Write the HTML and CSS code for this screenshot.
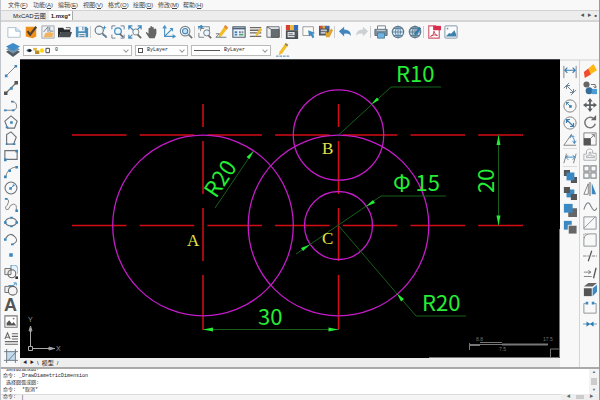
FILE: index.html
```html
<!DOCTYPE html>
<html lang="zh-CN">
<head>
<meta charset="utf-8">
<title>MxCAD云图</title>
<link rel="stylesheet" href="styles.css">
</head>
<body>
<div class="app">
<nav class="menu">
<button>文件(<u>F</u>)</button><button>功能(<u>A</u>)</button><button>编辑(<u>E</u>)</button><button>视图(<u>V</u>)</button><button>格式(<u>O</u>)</button><button>绘图(<u>D</u>)</button><button>修改(<u>M</u>)</button><button>帮助(<u>H</u>)</button>
</nav>
<div class="tabs">
<button class="tab">MxCAD云图</button><button class="tab active">1.mxg*</button>
<span class="tab-nav"><button aria-label="上一个">◀</button><button aria-label="下一个">▶</button><button aria-label="关闭">■</button></span>
</div>
<div class="toolbar">
<button aria-label="新建"><svg viewBox="0 0 16 16"><path d="M1 3h9l5 4v7H1z" fill="#fff" stroke="#a5bccb"/><path d="M10 3v4h5" fill="#dcebf5" stroke="#8fb4cf"/></svg></button>
<button aria-label="打开"><svg viewBox="0 0 16 16"><path d="M2 2h10l2 2v9l-4 2-8-2z" fill="#f09018"/><path d="M4 7l3 4 7-9" fill="none" stroke="#504238" stroke-width="2.5"/></svg></button>
<button aria-label="图纸"><svg viewBox="0 0 16 16"><path d="M1 1h14v14H1z" fill="#eef1f4" stroke="#9aa0a8"/><path d="M3 8l5-6v6M10 2v5h4" fill="none" stroke="#6d7a88"/><path d="M3 14l2-5 5-1 4 1-1 5z" fill="#efb45d"/></svg></button>
<button aria-label="打开文件"><svg viewBox="0 0 16 16"><path d="M0 3h6l1 2h7v3H3l-2 6H0z" fill="#292c2e"/><path d="M3 8h13l-2 6H1z" fill="#484e50"/><path d="M9 3h5v2" fill="none" stroke="#555"/></svg></button>
<button aria-label="保存"><svg viewBox="0 0 16 16"><path d="M1 2h12l2 2v10H1z" fill="#4b8dba"/><path d="M4 2h7v5H4zM4 9h8v5H4z" fill="#f5f8fa"/><path d="M9 2v4M5 11h6M5 13h6" stroke="#416d90"/></svg></button>
<i class="sep"></i>
<button aria-label="实时缩放"><svg viewBox="0 0 16 16"><circle cx="6" cy="6" r="4.7" fill="#eef8fd" stroke="#707980" stroke-width="1.3"/><path d="M9.500 9.500l5 5" stroke="#707980" stroke-width="2"/><path d="M12 1v4M10 3h4M10 12h4" stroke="#3d8bc6"/></svg></button>
<button aria-label="窗口缩放"><svg viewBox="0 0 16 16"><path d="M1 5V1h4M11 1h4v4M1 11v4h4M15 11v4h-4" fill="none" stroke="#627582"/><circle cx="8" cy="7" r="3.800" fill="#edf8fc" stroke="#468fc0" stroke-width="1.400"/><path d="M10 10l4 4" stroke="#626970" stroke-width="2"/></svg></button>
<button aria-label="范围缩放"><svg viewBox="0 0 16 16"><path d="M1 5V1h4M1 1l5 5M11 1h4v4M15 1l-5 5M1 11v4h4M1 15l4-4" fill="none" stroke="#3d88bf" stroke-width="1.400"/><circle cx="9" cy="8" r="3.500" fill="#eef7fb" stroke="#777"/><path d="M11 11l4 4" stroke="#666" stroke-width="2"/></svg></button>
<button aria-label="平移"><svg viewBox="0 0 16 16"><path d="M5 15l-4-6q0-2 2 0l1 1V4q1-2 2 0V2q1-2 2 0v1q1-2 2 0v2q2-2 3 0v5l-2 5z" fill="#656565"/></svg></button>
<button aria-label="坐标系"><svg viewBox="0 0 16 16"><path d="M3 1v12h12M3 13l9-9M1 4l2-3 2 3M12 11l3 2-3 2M9 4h3v3" fill="none" stroke="#4a91c5" stroke-width="1.300"/></svg></button>
<button aria-label="全部缩放"><svg viewBox="0 0 16 16"><circle cx="7" cy="7" r="5.500" fill="#f5fafc" stroke="#7b858d" stroke-width="1.300"/><circle cx="7" cy="7" r="3" fill="#c7e1f1" stroke="#4288b9" stroke-width="1.300"/><path d="M11 11l4 4" stroke="#777" stroke-width="2"/></svg></button>
<i class="sep"></i>
<button aria-label="查找"><svg viewBox="0 0 16 16"><path d="M1 5V2h12v5M1 9v5h6M3 7V4h4" fill="none" stroke="#6b7985"/><path d="M0 2h5M3 0l2 2-2 2" fill="none" stroke="#3a89bf" stroke-width="1.500"/><circle cx="10" cy="9" r="3.500" fill="#e9f5fc" stroke="#61717d"/><path d="M12 12l3 3" stroke="#666" stroke-width="2"/></svg></button>
<button aria-label="画笔"><svg viewBox="0 0 16 16"><path d="M5 10l7-10 3 3-8 10-3 1z" fill="#f5bd25"/><path d="M12 0l3 3-2 2-3-3z" fill="#e68a40"/><path d="M1 10h4l-4 4h12" fill="none" stroke="#606a72"/></svg></button>
<button aria-label="特性"><svg viewBox="0 0 16 16"><path d="M1 2h14v12H1z" fill="#edf3f8" stroke="#52606c" stroke-width="1.300"/><path d="M1 4h14" stroke="#4a6179" stroke-width="2"/><path d="M3 7h3v2H3zM3 10h3v2H3z" fill="#4380bd"/><path d="M8 7h2v2H8z" fill="#b24ec4"/><path d="M11 7h2v2h-2zM8 10h5v2H8z" fill="#54a870"/></svg></button>
<button aria-label="图层列表"><svg viewBox="0 0 16 16"><path d="M1 3h13M1 6h13M1 9h13M1 13h13" stroke="#6b6b64" stroke-width="1.500"/><path d="M8 10l5-7 2 2-5 7-3 1z" fill="#edbd3d"/></svg></button>
<button aria-label="块"><svg viewBox="0 0 16 16"><path d="M1 2h14v12H1z" fill="#edf0f3" stroke="#59636b"/><path d="M6 5h9v9H6zM1 2l5 3" fill="#666d71" stroke="#555"/></svg></button>
<i class="sep"></i>
<button aria-label="颜色"><svg viewBox="0 0 16 16"><path d="M1 0h5v6H1z" fill="#d73e33"/><path d="M6 0h4v6H6z" fill="#ebbc30"/><path d="M10 0h5v6h-5z" fill="#3469bb"/><path d="M1 6h14v10H1z" fill="#4b5257"/><path d="M3 8h8v6H3z" fill="#e3e6e8"/><path d="M4 10h5M4 12h8l2-5" fill="none" stroke="#59616a"/></svg></button>
<button aria-label="选择"><svg viewBox="0 0 16 16"><path d="M1 2h12v10H1z" fill="#fcfcf5" stroke="#91929a"/><path d="M7 6l8 3-3 1 2 4-2 1-2-4-2 2z" fill="#3c8cc5"/></svg></button>
<button aria-label="匹配"><svg viewBox="0 0 16 16"><path d="M0 1h12v11H0z" fill="#4f5762"/><path d="M1 1h3v3H1z" fill="#d84c3e"/><path d="M4 1h3v3H4z" fill="#d8a838"/><path d="M7 1h4v3H7z" fill="#3d70ba"/><path d="M2 6h7M2 9h5" stroke="#c3c6cc" stroke-width="2"/><path d="M7 7l3 2 4-5 2 2-4 8H8z" fill="#dfa52e"/></svg></button>
<i class="sep"></i>
<button aria-label="撤销"><svg viewBox="0 0 16 16"><path d="M1 7l6-5v3q8 0 8 8-2-4-8-3v3z" fill="#4286bd"/></svg></button>
<button aria-label="重做"><svg viewBox="0 0 16 16"><path d="M15 7L9 2v3q-8 0-8 8 2-4 8-3v3z" fill="#cdd0d2"/></svg></button>
<i class="sep"></i>
<button aria-label="打印"><svg viewBox="0 0 16 16"><path d="M4 1h9v4H4z" fill="#fff" stroke="#657480"/><path d="M1 5h14v7H1z" fill="#7e8d98" stroke="#596b77"/><path d="M3 6h10" stroke="#d0e5f2"/><path d="M4 9h8v6H4z" fill="#73b5e0" stroke="#497a9b"/></svg></button>
<button aria-label="网页"><svg viewBox="0 0 16 16"><circle cx="8" cy="8" r="6.500" fill="#dceaf3" stroke="#637b8c" stroke-width="1.300"/><path d="M1 8h14M8 1v14M3 4h10M3 12h10M8 1q-6 7 0 14M8 1q6 7 0 14" fill="none" stroke="#557f9e"/></svg></button>
<button aria-label="上传"><svg viewBox="0 0 16 16"><circle cx="8" cy="8" r="6.500" fill="#bfd0da" stroke="#637b8c" stroke-width="1.300"/><path d="M1 8h14M8 1v14M3 4h10M3 12h10M8 1q-6 7 0 14M8 1q6 7 0 14" fill="none" stroke="#58798f"/><path d="M7 10l6-8 2 2-6 8" fill="#3479ab"/></svg></button>
<i class="sep"></i>
<button aria-label="导出PDF"><svg viewBox="0 0 16 16"><path d="M2 1h8l4 4v10H2z" fill="#fff" stroke="#d25a70" stroke-width="1.300"/><path d="M7 1h9v5H7z" fill="#d92d4d"/><path d="M4 13q4-1 4-6 1 5 4 5-4-2-8 1" fill="none" stroke="#cc3954"/></svg></button>
<button aria-label="导出图片"><svg viewBox="0 0 16 16"><rect x="1" y="1" width="14" height="14" rx="1" fill="#f9fbfc" stroke="#758c9b"/><path d="M2 13l4-4 2 1 4-4 2 5v2z" fill="#3d82af"/><circle cx="4" cy="4" r="1" fill="#7292a5"/></svg></button>
</div>
<div class="toolbar props">
<button class="layers" aria-label="图层"><svg viewBox="0 0 16 16"><path d="M0 10l8-4 8 4-8 6z" fill="#505b66"/><path d="M0 7l8-4 8 4-8 5z" fill="#7796ac"/><path d="M0 4l8-4 8 4-8 5z" fill="#3e8cc9"/></svg></button>
<label class="combo layer"><svg class="states" viewBox="0 0 28 8"><path d="M0 4q3-4 7 0-4 4-7 0" fill="#50677a"/><circle cx="4" cy="4" r="1.500" fill="#111"/><path d="M8 1h4v3H8z" fill="#dfb13b"/><path d="M10 4h5v4h-5z" fill="#b98d24"/><circle cx="18" cy="4" r="2.500" fill="#ffd61e"/><path d="M22.500 1.500h4v5h-4z" fill="#fff" stroke="#333"/></svg><select aria-label="图层"><option>0</option></select></label>
<label class="combo color"><i class="swatch"></i><select aria-label="颜色"><option>ByLayer</option></select></label>
<label class="combo line"><i class="stroke"></i><select aria-label="线型"><option>ByLayer</option></select></label>
<button aria-label="线型编辑"><svg viewBox="0 0 16 16"><path d="M4 10l7-10 3 2-7 10-4 2z" fill="#f5bd25"/><path d="M11 0l3 2-1 2-3-2z" fill="#9b8368"/><path d="M0 15h16" stroke="#3e73a8" stroke-dasharray="3 1"/></svg></button>
</div>
<main class="work">
<div class="tools left">
<button aria-label="直线"><svg viewBox="0 0 16 16"><path d="M2 14L14 2" stroke="#777"/><path d="M1 12h3v3H1zM12 1h3v3h-3z" fill="#4186b9"/></svg></button>
<button aria-label="构造线"><svg viewBox="0 0 16 16"><path d="M2 14L14 2" stroke="#777" stroke-width="1.500"/><path d="M0 12h4v4H0zM12 0h4v4h-4z" fill="#555"/><path d="M7 7h3v3H7z" fill="#4186b9"/></svg></button>
<button aria-label="多段线"><svg viewBox="0 0 16 16"><path d="M1 14h9q6-1 4-7-1-3-5-3" fill="none" stroke="#777"/><path d="M0 13h3v2H0zM9 13h3v2H9zM8 3h3v2H8z" fill="#4186b9"/></svg></button>
<button aria-label="正多边形"><svg viewBox="0 0 16 16"><path d="M8 1l7 6-3 8H4L1 7z" fill="none" stroke="#6b7278" stroke-width="1.300"/><path d="M7 7h3v3H7zM2 13h3v2H2z" fill="#3986be"/></svg></button>
<button aria-label="多边形"><svg viewBox="0 0 16 16"><path d="M3 15V4l5-3 6 6-3 8z" fill="none" stroke="#6b7278" stroke-width="1.300"/><path d="M2 14h2v2H2zM10 14h3v2h-3z" fill="#3986be"/></svg></button>
<button aria-label="矩形"><svg viewBox="0 0 16 16"><path d="M1 3h14v10H1z" fill="none" stroke="#6b7278" stroke-width="1.300"/><path d="M0 12h3v3H0zM13 2h3v3h-3z" fill="#3986be"/></svg></button>
<button aria-label="圆弧"><svg viewBox="0 0 16 16"><path d="M2 14Q3 4 14 2" fill="none" stroke="#777"/><path d="M0 12h3v3H0zM5 5h3v3H5zM13 1h3v3h-3z" fill="#3986be"/></svg></button>
<button aria-label="圆"><svg viewBox="0 0 16 16"><circle cx="8" cy="8" r="6.800" fill="none" stroke="#6b7278" stroke-width="1.200"/><path d="M8 8l3-3" stroke="#3986be"/><path d="M6 7h3v3H6zM10 4h2v2h-2z" fill="#3986be"/></svg></button>
<button aria-label="样条曲线"><svg viewBox="0 0 16 16"><path d="M2 1q4 0 3 4t-3 5q-1 4 3 3 2-6 6-6t3 7" fill="none" stroke="#777"/><path d="M1 0h3v2H1zM13 13h3v3h-3z" fill="#3986be"/></svg></button>
<button aria-label="椭圆"><svg viewBox="0 0 16 16"><ellipse cx="8" cy="8" rx="6.500" ry="4.500" fill="none" stroke="#6b7278" stroke-width="1.200"/><path d="M0 7h3v3H0zM13 7h3v3h-3zM7 2h3v2H7zM7 12h3v2H7z" fill="#3986be"/></svg></button>
<button aria-label="椭圆弧"><svg viewBox="0 0 16 16"><path d="M2 7q5-8 11-1 4 5-3 8" fill="none" stroke="#6b7278" stroke-width="1.200"/><path d="M0 7h3v3H0zM8 13h3v2H8z" fill="#3986be"/></svg></button>
<button aria-label="点"><svg viewBox="0 0 16 16"><path d="M6 6h4v4H6z" fill="#3986be"/></svg></button>
<button aria-label="创建块"><svg viewBox="0 0 16 16"><path d="M8 6V0h5l3 3v7" fill="#e6f3fc" stroke="#4686b3"/><path d="M1 4h7v7H1z" fill="#eee" stroke="#666"/><circle cx="9" cy="10" r="4.500" fill="none" stroke="#666" stroke-width="1.200"/><path d="M13 13h3v3h-3z" fill="#333"/></svg></button>
<button aria-label="插入块"><svg viewBox="0 0 16 16"><path d="M1 5h9v7H1z" fill="#eee" stroke="#666"/><circle cx="10" cy="10" r="5" fill="#f5f5f5" stroke="#666" stroke-width="1.200"/><path d="M5 4h6l2-3M11 1h3v3" fill="none" stroke="#3986be"/></svg></button>
<button class="letter" aria-label="单行文字">A</button>
<button aria-label="图像"><svg viewBox="0 0 16 16"><path d="M1 1h14v13H1z" fill="#fff" stroke="#777" stroke-width="1.200"/><path d="M3 12V9l3-3 3 4 2-2 3 4z" fill="#555"/><circle cx="11" cy="4" r="1" fill="#777"/></svg></button>
<button aria-label="多行文字"><svg viewBox="0 0 16 16"><path d="M1 8l3-7 3 7M2 6h4M9 2h7M9 5h7M9 8h7M1 11h15M1 14h15" fill="none" stroke="#666" stroke-width="1.200"/></svg></button>
<button aria-label="填充"><svg viewBox="0 0 16 16"><path d="M3 3h10v10H3z" fill="#c4dced"/><path d="M3 0v16M0 3h16M13 0v16M0 13h16M5 13l9-10" fill="none" stroke="#66747e"/></svg></button>
</div>
<svg class="drawing" viewBox="20 59 540 299" preserveAspectRatio="xMidYMid meet" role="img" aria-label="图形">
<path d="M20 59.500h540" stroke="#45454d"/>
<g class="center"><path d="M72 135H523M72 225.500H523" stroke-dasharray="54.500 13.200"/><path d="M203 104v23m0 14v53m0 14v53m0 14v55M338.500 104v23m0 14v53m0 14v53m0 14v55"/></g>
<g class="circles"><circle cx="203" cy="225.500" r="90.300"/><circle cx="338.500" cy="225.500" r="90.300"/><circle cx="338.500" cy="135" r="45.200"/><circle cx="338.500" cy="225.500" r="34"/></g>
<g class="dims"><path d="M203 329.500H338.500M498.500 135V225M338.500 135L391 87H441M296 254L381 196H446M338.500 225.500L416 316H466M215 208L253.500 151"/></g>
<g class="arrows"><path d="M203 329.500l10-2v4zM338.500 329.500l-10-2v4zM498.500 135l-2 10h4zM498.500 225.500l-2-10h4zM371 104.500l6-7 2 2.500zM366 206.500l7-6.500 2 3zM310 244.500l-7 6.500-2-3zM397 293.500l4 8 3-2.500zM253.500 151l-7 6 3 2z"/></g>
<g class="values"><text x="396" y="82">R10</text><text x="393" y="191">Φ 15</text><text x="422" y="311">R20</text><text x="258" y="325">30</text><text transform="translate(494 193) rotate(-90)">20</text><text transform="translate(216 199) rotate(-56)">R20</text></g>
<g class="names"><text x="187" y="246">A</text><text x="322" y="154">B</text><text x="322" y="244">C</text></g>
<g class="guides"><path d="M28.500 346.500h4v4h-4zM30.500 346V328M33 348.500h22M29 331l1.500-5 1.500 5zM49 347l5 1.500-5 1.500z"/><text x="28" y="322">Y</text><text x="56" y="351">X</text></g>
<g class="scale"><path d="M469.500 350v-7M469 344.500h79M480 342.500h22"/><path d="M469 345h11M502 344.500h46" stroke-width="2"/><text x="476" y="341">8.8</text><text x="499" y="351">7.5</text><text x="543" y="341">17.5</text></g>
<path class="corner" d="M559.500 229V357.500H429M550.500 357v-8h9"/>
</svg>
<div class="tools dimension">
<button aria-label="线性标注"><svg viewBox="0 0 16 16"><path d="M1 1v14M15 1v14" stroke="#777"/><path d="M2 6h12M5 3L2 6l3 3M11 3l3 3-3 3" fill="none" stroke="#397fb2" stroke-width="1.300"/></svg></button>
<button aria-label="对齐标注"><svg viewBox="0 0 16 16"><path d="M1 7l6-6M9 15l6-6M4 4l8 8M4 8V4h4M8 12h4V8" fill="none" stroke="#60798b"/></svg></button>
<button aria-label="半径标注"><svg viewBox="0 0 16 16"><circle cx="8" cy="8" r="7" fill="none" stroke="#777"/><path d="M8 8L4 4M4 7V4h3" fill="none" stroke="#397fb2"/><path d="M7 7h3v3H7z" fill="#397fb2"/></svg></button>
<button aria-label="直径标注"><svg viewBox="0 0 16 16"><circle cx="8" cy="8" r="7" fill="none" stroke="#777"/><path d="M4 4l8 8M4 8V4h4M8 12h4V8" fill="none" stroke="#397fb2" stroke-width="1.400"/></svg></button>
<button aria-label="角度标注"><svg viewBox="0 0 16 16"><path d="M10 1L1 14h14" fill="none" stroke="#777"/><path d="M9 3q5 3 4 9M8 6l1-3 4 1M11 9l2 3 2-3" fill="none" stroke="#397fb2"/></svg></button>
<i class="rule"></i>
<button aria-label="坐标标注"><svg viewBox="0 0 16 16"><path d="M1 14l3-11M12 14l3-11" stroke="#777"/><path d="M3 7h10M6 5L3 7l3 3M11 5l3 2-3 3" fill="none" stroke="#397fb2"/></svg></button>
<i class="rule"></i>
<button aria-label="前置"><svg viewBox="0 0 16 16"><path d="M1 1h7v7H1zM9 9h7v7H9z" fill="#555"/><path d="M4 4h9v9H4z" fill="#3b88c2"/></svg></button>
<button aria-label="后置"><svg viewBox="0 0 16 16"><path d="M4 4h9v9H4z" fill="#3b88c2"/><path d="M1 1h7v7H1zM9 9h7v7H9z" fill="#555"/></svg></button>
<button aria-label="置于对象之上"><svg viewBox="0 0 16 16"><path d="M6 6h10v10H6z" fill="#666"/><path d="M1 1h10v10H1z" fill="#3b88c2"/></svg></button>
<button aria-label="置于对象之下"><svg viewBox="0 0 16 16"><path d="M1 1h9v10H1z" fill="#3b88c2"/><path d="M6 6h10v10H6z" fill="#666" stroke="#f5f5f5"/></svg></button>
</div>
<div class="tools modify">
<button aria-label="删除"><svg viewBox="0 0 16 16"><path d="M6 5l6-5 4 7-8 5z" fill="#ffb715"/><path d="M1 9l5-4 3 7-7 4z" fill="#ed4d2e"/></svg></button>
<button aria-label="复制"><svg viewBox="0 0 16 16"><circle cx="4" cy="4" r="3.500" fill="#666"/><circle cx="7" cy="11" r="4" fill="#346d9b"/><path d="M10 9h6v6h-6z" fill="#4c9bd2"/><path d="M9 4h5v4M12 6l2 2 2-2" fill="none" stroke="#666"/></svg></button>
<button aria-label="移动"><svg viewBox="0 0 16 16"><path d="M8 0l3 4H9v3h3V5l4 3-4 3V9H9v3h2l-3 4-3-4h2V9H4v2L0 8l4-3v2h3V4H5z" fill="#5a5f63"/></svg></button>
<button aria-label="旋转"><svg viewBox="0 0 16 16"><path d="M12 4a6 6 0 1 0 2 6" fill="none" stroke="#777" stroke-width="1.700"/><path d="M9 6h6V0z" fill="#666"/></svg></button>
<button aria-label="缩放"><svg viewBox="0 0 16 16"><path d="M1 1h14v14H1z" fill="none" stroke="#777"/><path d="M1 7h8v8H1z" fill="#555"/><path d="M9 7l4-4M10 3h3v3" fill="none" stroke="#777"/></svg></button>
<button aria-label="偏移"><svg viewBox="0 0 16 16"><path d="M1 14V7h3V3q4-4 7 0v3h4v8zM4 11V9h3V5h2v4h4v2z" fill="none" stroke="#a4a9ac"/></svg></button>
<button aria-label="阵列"><svg viewBox="0 0 16 16"><path d="M1 1h6v6H1zM9 1h6v6H9zM1 9h6v6H1zM9 9h6v6H9z" fill="none" stroke="#858b8f" stroke-width="1.300"/></svg></button>
<button aria-label="镜像"><svg viewBox="0 0 16 16"><path d="M6 2v12H1z" fill="#fff" stroke="#777"/><path d="M8 0v16" stroke="#555"/><path d="M10 1l5 13h-5z" fill="#3b88c2"/></svg></button>
<button aria-label="曲线"><svg viewBox="0 0 16 16"><path d="M1 12Q5-1 9 8t7 2" fill="none" stroke="#7b8185" stroke-width="1.200"/></svg></button>
<button aria-label="倒角"><svg viewBox="0 0 16 16"><path d="M1 1h14v14H1zM1 14L14 1" fill="none" stroke="#858b8f"/></svg></button>
<button aria-label="圆角"><svg viewBox="0 0 16 16"><path d="M1 15V7q1-6 7-6h7v14z" fill="none" stroke="#858b8f"/><path d="M1 6V1h5" fill="none" stroke="#888" stroke-dasharray="2 1"/></svg></button>
<button aria-label="修剪"><svg viewBox="0 0 16 16"><path d="M10 2L6 14" stroke="#555" stroke-width="1.400"/><path d="M0 8h7M10 8h6" stroke="#777" stroke-dasharray="4 1"/></svg></button>
<button aria-label="延伸"><svg viewBox="0 0 16 16"><path d="M15 2l-3 12" stroke="#555" stroke-width="1.400"/><path d="M1 7h8M6 5l3 2-3 2M1 12h9" fill="none" stroke="#777"/></svg></button>
<button aria-label="分解"><svg viewBox="0 0 16 16"><path d="M1 6h9v9H1z" fill="#555"/><path d="M1 4l5-4h10l-5 4z" fill="#666"/><path d="M11 6l5-4v8l-5 5z" fill="#3e8ac4"/></svg></button>
<button aria-label="打断"><svg viewBox="0 0 16 16"><path d="M3 4H1v11h14V4h-2" fill="none" stroke="#858b8f"/><path d="M3 2h3v3H3zM10 2h3v3h-3z" fill="#3b88c2"/></svg></button>
<button aria-label="合并"><svg viewBox="0 0 16 16"><path d="M0 8h16" stroke="#558cae"/><path d="M4 5l4 3-4 3zM12 5L8 8l4 3z" fill="#287bb4"/></svg></button>
</div>
<div class="sheets"><button aria-label="上一页">◀</button><button aria-label="下一页">▶</button><span>\</span><button>模型</button><span>/</span></div>
</main>
<section class="command">
<div class="log"><p>&nbsp;选择圆弧或圆:</p><p>命令: <code>_DrawDiametricDimension</code></p><p>&nbsp;选择圆弧或圆:</p><p>命令:&nbsp; *取消*</p></div>
<div class="vscroll"><span>▲</span><i></i><span>▼</span></div>
<label class="prompt">命令: <input aria-label="命令" value="|"></label>
<div class="hscroll"><span>◀</span><i></i><span>▶</span></div>
</section>
</div>
</body>
</html>
```

FILE: styles.css
```css
* { box-sizing: border-box; }
body { margin: 0; background: #f8f8f8; color: #222; font-family: "Liberation Sans", "Noto Sans CJK SC", sans-serif; font-size: 5px; }
button, select, input { font: inherit; color: inherit; border: 0; background: none; padding: 0; margin: 0; }
.app { display: flex; flex-direction: column; height: 100vh; overflow: hidden; border-left: 1px solid #c2c5c9; border-right: 1px solid #96999f; }
.menu { display: flex; height: 11px; flex: none; padding-left: 7px; gap: 7px; align-items: center; border-bottom: 1px solid #d2d2d2; font-size: 6px; line-height: 9px; color: #444; }
.menu button { white-space: nowrap; width: 18px; }
.tabs { display: flex; height: 11px; flex: none; align-items: center; background: #ededed; border-bottom: 2px solid #d5d5d5; padding-left: 8px; font-size: 6px; line-height: 8px; }
.tab { height: 9px; padding: 0 3px 0 4px; white-space: nowrap; }
.tab.active { background: #fff; font-weight: bold; border-right: 1px solid #aaa; padding: 0 2px; }
.tab-nav { margin-left: auto; display: flex; gap: 3px; font-size: 4px; padding-right: 2px; color: #555; }
.toolbar { display: flex; flex: none; height: 19px; padding-left: 4px; align-items: center; }
.toolbar button { width: 17px; height: 16px; display: grid; place-items: center; flex: none; }
.toolbar button svg { width: 14px; height: 14px; }
.sep { width: 1px; height: 12px; margin-right: 1px; background: #ccc; flex: none; }
.props { height: 18px; gap: 3px; padding-left: 4px; }
.props .layers { width: 15px; }
.combo { display: flex; align-items: center; height: 11px; border: 1px solid #bbb; background: #fff; padding: 0 3px 0 2px; gap: 4px; }
.combo::after { content: ""; width: 3px; height: 3px; border: solid #999; border-width: 0 1px 1px 0; transform: rotate(45deg); flex: none; }
.combo select { appearance: none; flex: 1; min-width: 0; font-size: 5px; line-height: 7px; font-family: "Liberation Mono", monospace; }
.layer { flex: 0 1 109px; }
.color { flex: 0 1 53px; }
.line { flex: 0 1 80px; }
.states { width: 25px; height: 7px; flex: none; }
.swatch { width: 5px; height: 5px; border: 1px solid #555; flex: none; }
.stroke { width: 26px; height: 1px; background: #555; flex: none; }
.work { display: grid; flex: 1; min-height: 0; grid-template-columns: 19px 1fr 19px 20px; grid-template-rows: 1fr 9px; }
.drawing { width: 100%; height: 100%; background: #000; grid-row: 1; grid-column: 2; display: block; min-height: 0; }
.tools { grid-row: 1 / 3; display: flex; flex-direction: column; align-items: center; min-height: 0; }
.tools button { height: 17px; flex: 0 1 17px; min-height: 0; width: 18px; display: grid; place-items: center; }
.tools svg { width: 14px; height: 14px; }
.tools .letter { font-size: 18px; line-height: 17px; font-weight: bold; color: #555; }
.left { grid-column: 1; padding: 4px 0 3px; }
.dimension { grid-column: 3; border-top: 2px solid #e5e5e5; padding-top: 2px; }
.modify { grid-column: 4; border-top: 2px solid #e5e5e5; border-left: 1px solid #d5d5d5; padding: 2px 0 35px; }
.rule { width: 14px; height: 1px; background: #ddd; flex: none; }
.sheets { grid-row: 2; grid-column: 2; display: flex; align-items: center; gap: 3px; padding-left: 3px; font-size: 6px; line-height: 8px; background: #eee; }
.sheets button[aria-label] { font-size: 4px; }
.center { stroke: #d40c14; stroke-width: 1.5; fill: none; }
.circles { stroke: #c41bc9; stroke-width: 1.3; fill: none; }
.dims { stroke: #17601c; stroke-width: 1; fill: none; }
.arrows, .values { fill: #25ed35; }
.values { font-family: "Noto Sans CJK SC", sans-serif; font-size: 22px; }
.names { fill: #e5e443; font-family: "Liberation Serif", serif; font-size: 17px; }
.guides { stroke: #aaa; fill: none; }
.guides text { fill: #999; stroke: none; font-size: 7px; }
.scale { stroke: #777; fill: none; }
.scale text { fill: #777; stroke: none; font-size: 5px; }
.corner { stroke: #777; fill: none; }
.command { flex: none; height: 33px; display: grid; grid-template-columns: 1fr 10px; grid-template-rows: 25px 6px; border-top: 2px solid #aaa; background: #fff; font-family: "Liberation Mono", "Noto Sans CJK SC", monospace; line-height: 7px; }
.log { display: flex; flex-direction: column; justify-content: flex-end; overflow: hidden; padding-left: 2px; font-size: 5px; }
.log p { margin: 0; flex: none; height: 7px; white-space: pre; }
.log code { font: inherit; }
.vscroll { display: flex; flex-direction: column; align-items: center; justify-content: space-between; background: #f3f3f3; font-size: 4px; color: #666; }
.vscroll i { width: 6px; height: 7px; background: #ccc; }
.prompt { display: flex; gap: 5px; background: #f5f5f5; padding-left: 2px; border-top: 1px solid #ddd; grid-column: 1; grid-row: 2; margin-right: 28px; line-height: 5px; }
.prompt input { flex: 1; min-width: 0; height: 5px; }
.hscroll { grid-row: 2; grid-column: 1 / 3; justify-self: end; width: 38px; display: flex; align-items: center; justify-content: space-evenly; background: #eee; font-size: 4px; color: #666; }
.hscroll i { width: 8px; height: 4px; background: #ccc; }
```
